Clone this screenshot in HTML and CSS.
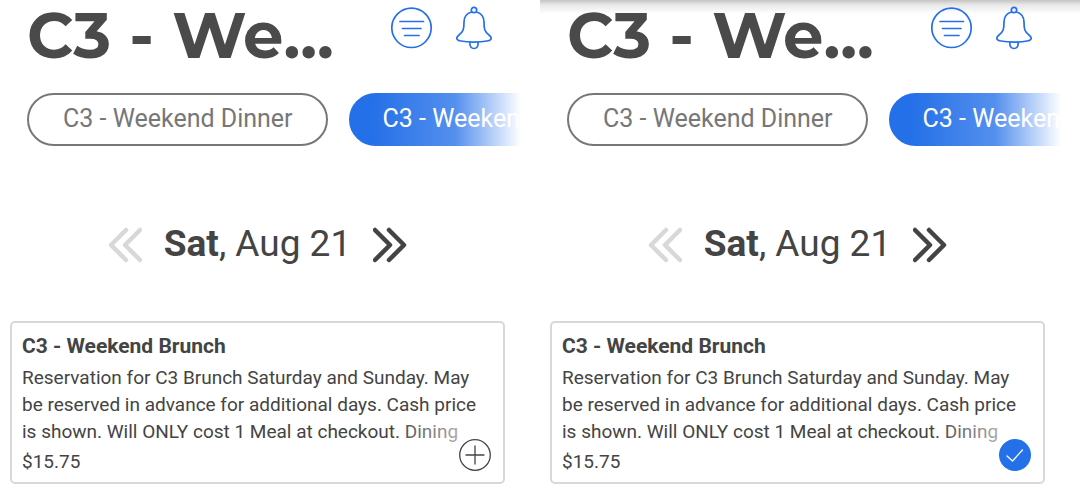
FILE: index.html
```html
<!DOCTYPE html>
<html lang="en">

<head>
	<meta charset="utf-8">
	<title>C3 - Weekend Brunch</title>
	<link rel="stylesheet" href="styles.css">
</head>

<body>
	<div class="screens">
		<section class="screen">
			<header class="header">
				<h1 class="title">C3 - We...</h1>
				<button class="icon-button" type="button" aria-label="Filter">
					<svg width="42" height="44" viewBox="0 0 42 44">
						<circle cx="20.500" cy="21.800" r="19.7" />
						<path d="M9 15.5H32.500M11.500 22.5H30M13.500 29.5H28" />
					</svg>
				</button>
				<button class="icon-button" type="button" aria-label="Notifications">
					<svg width="38" height="44" viewBox="0 0 38 44">
						<circle cx="19" cy="4" r="2.7" />
						<path d="M16.500 6C11.500 7.500 9 11 9 16C9 23 8.500 26 3.500 29.500C0 32.500 2.500 34.500 6 35C13 36.500 25 36.500 32 35C35.500 34.500 38 32.500 34.500 29.500C29.500 26 29 23 29 16C29 11 26.500 7.500 21.500 6" />
						<path d="M15 36.500C13.500 44.500 24.500 44.500 23 36.500" />
					</svg>
				</button>
			</header>
			<nav class="tabs">
				<button class="tab" type="button">C3 - Weekend Dinner</button>
				<button class="tab active" type="button">C3 - Weekend Brunch</button>
			</nav>
			<div class="date-picker">
				<button class="arrow disabled" type="button" aria-label="Previous day" disabled>
					<svg width="34" height="36" viewBox="0 0 34 36">
						<path d="M18 3L3 18L18 33M32 3L17 18L32 33" />
					</svg>
				</button>
				<div class="date"><b>Sat</b>, Aug 21</div>
				<button class="arrow" type="button" aria-label="Next day">
					<svg width="34" height="36" viewBox="0 0 34 36">
						<path d="M2 3L17 18L2 33M16 3L31 18L16 33" />
					</svg>
				</button>
			</div>
			<article class="card">
				<h2 class="card-title">C3 - Weekend Brunch</h2>
				<p class="description">Reservation for C3 Brunch Saturday and Sunday. May be reserved in advance for additional days. Cash price is shown. Will ONLY cost 1 Meal at checkout. Dining</p>
				<div class="price">$15.75</div>
				<button class="select-button" type="button" aria-label="Add">
					<svg width="32" height="32" viewBox="0 0 32 32">
						<circle cx="16" cy="16" r="15.300" />
						<path d="M16 7V25M7 16H25" />
					</svg>
				</button>
			</article>
		</section>

		<section class="screen scrolled">
			<header class="header">
				<h1 class="title">C3 - We...</h1>
				<button class="icon-button" type="button" aria-label="Filter">
					<svg width="42" height="44" viewBox="0 0 42 44">
						<circle cx="20.500" cy="21.800" r="19.7" />
						<path d="M9 15.5H32.500M11.500 22.5H30M13.500 29.5H28" />
					</svg>
				</button>
				<button class="icon-button" type="button" aria-label="Notifications">
					<svg width="38" height="44" viewBox="0 0 38 44">
						<circle cx="19" cy="4" r="2.7" />
						<path d="M16.500 6C11.500 7.500 9 11 9 16C9 23 8.500 26 3.500 29.500C0 32.500 2.500 34.500 6 35C13 36.500 25 36.500 32 35C35.500 34.500 38 32.500 34.500 29.500C29.500 26 29 23 29 16C29 11 26.500 7.500 21.500 6" />
						<path d="M15 36.500C13.500 44.500 24.500 44.500 23 36.500" />
					</svg>
				</button>
			</header>
			<nav class="tabs">
				<button class="tab" type="button">C3 - Weekend Dinner</button>
				<button class="tab active" type="button">C3 - Weekend Brunch</button>
			</nav>
			<div class="date-picker">
				<button class="arrow disabled" type="button" aria-label="Previous day" disabled>
					<svg width="34" height="36" viewBox="0 0 34 36">
						<path d="M18 3L3 18L18 33M32 3L17 18L32 33" />
					</svg>
				</button>
				<div class="date"><b>Sat</b>, Aug 21</div>
				<button class="arrow" type="button" aria-label="Next day">
					<svg width="34" height="36" viewBox="0 0 34 36">
						<path d="M2 3L17 18L2 33M16 3L31 18L16 33" />
					</svg>
				</button>
			</div>
			<article class="card">
				<h2 class="card-title">C3 - Weekend Brunch</h2>
				<p class="description">Reservation for C3 Brunch Saturday and Sunday. May be reserved in advance for additional days. Cash price is shown. Will ONLY cost 1 Meal at checkout. Dining</p>
				<div class="price">$15.75</div>
				<button class="select-button selected" type="button" aria-label="Remove">
					<svg width="32" height="32" viewBox="0 0 32 32">
						<circle cx="16" cy="16" r="16" />
						<path d="M8 17L13.500 22L23.500 11" />
					</svg>
				</button>
			</article>
		</section>
	</div>
</body>

</html>
```

FILE: styles.css
```css
body {
	margin: 0;
	background-color: white;
	color: #444;
	font-family: Roboto, "Liberation Sans", sans-serif;
}

button {
	padding: 0;
	border: none;
	background: none;
	font-family: inherit;
	cursor: pointer;
}

svg {
	display: block;
	fill: none;
	stroke-linecap: round;
	stroke-linejoin: round;
}

.screens {
	display: grid;
	grid-template-columns: 1fr 1fr;
}

.screen {
	position: relative;
	padding: 0 35px 7px 10px;
}

/* shadow of the bar above the content */
.scrolled::before {
	content: "";
	position: absolute;
	top: 0;
	left: 0;
	right: 0;
	height: 14px;
	background: linear-gradient(#c4c4c4, #e8e8e8 35%, rgba(255, 255, 255, 0));
}

.header {
	position: relative;
	display: flex;
	align-items: flex-start;
	gap: 22px;
	padding: 6px 12px 0 17px;
}

.title {
	flex: 1;
	margin: 0;
	font-family: Montserrat, Inter, sans-serif;
	font-size: 64px;
	font-weight: 700;
	line-height: 58px;
	white-space: nowrap;
	color: #4a4a4a;
}

.icon-button svg {
	stroke: #2470e8;
	stroke-width: 1.7;
}

.tabs {
	position: relative;
	display: flex;
	gap: 21px;
	margin: 29px -16px 0 17px;
	overflow: hidden;
}

.tabs::after {
	content: "";
	position: absolute;
	top: 0;
	right: 0;
	bottom: 0;
	width: 150px;
	background: linear-gradient(to right, rgba(255, 255, 255, 0), rgba(255, 255, 255, 0.22) 56%, white);
}

.tab {
	flex: none;
	height: 53px;
	padding: 0 33px 2px 34px;
	border: 2px solid #777;
	border-radius: 27px;
	font-size: 25px;
	line-height: 47px;
	color: #777;
}

.tab.active {
	padding: 0 32px 2px;
	border-color: #2470e8;
	background-color: #2470e8;
	color: white;
}

.date-picker {
	display: flex;
	justify-content: center;
	align-items: center;
	gap: 22px;
	margin: 75px 0 53px;
}

.date {
	padding-bottom: 2px;
	font-size: 37px;
	line-height: 45px;
}

.arrow svg {
	stroke: #444;
	stroke-width: 4.5;
}

.arrow.disabled svg {
	stroke: #d8d8d8;
}

.card {
	position: relative;
	padding: 10px 10px 8px;
	border: 2px solid #d8d8d8;
	border-radius: 5px;
}

.card-title {
	margin: 0;
	font-size: 21px;
	line-height: 27px;
}

.description {
	position: relative;
	margin: 4px 0;
	font-size: 19px;
	line-height: 27px;
}

/* fades out the end of the last line */
.description::after {
	content: "";
	position: absolute;
	right: 0;
	bottom: 0;
	width: 100px;
	height: 27px;
	background: linear-gradient(to right, rgba(255, 255, 255, 0), rgba(255, 255, 255, 0.85));
}

.price {
	font-size: 19px;
	line-height: 25px;
}

.select-button {
	position: absolute;
	right: 12px;
	bottom: 11px;
}

.select-button svg {
	stroke: #444;
	stroke-width: 1.3;
}

.select-button.selected svg {
	stroke: white;
}

.select-button.selected circle {
	fill: #2470e8;
	stroke: none;
}
```
